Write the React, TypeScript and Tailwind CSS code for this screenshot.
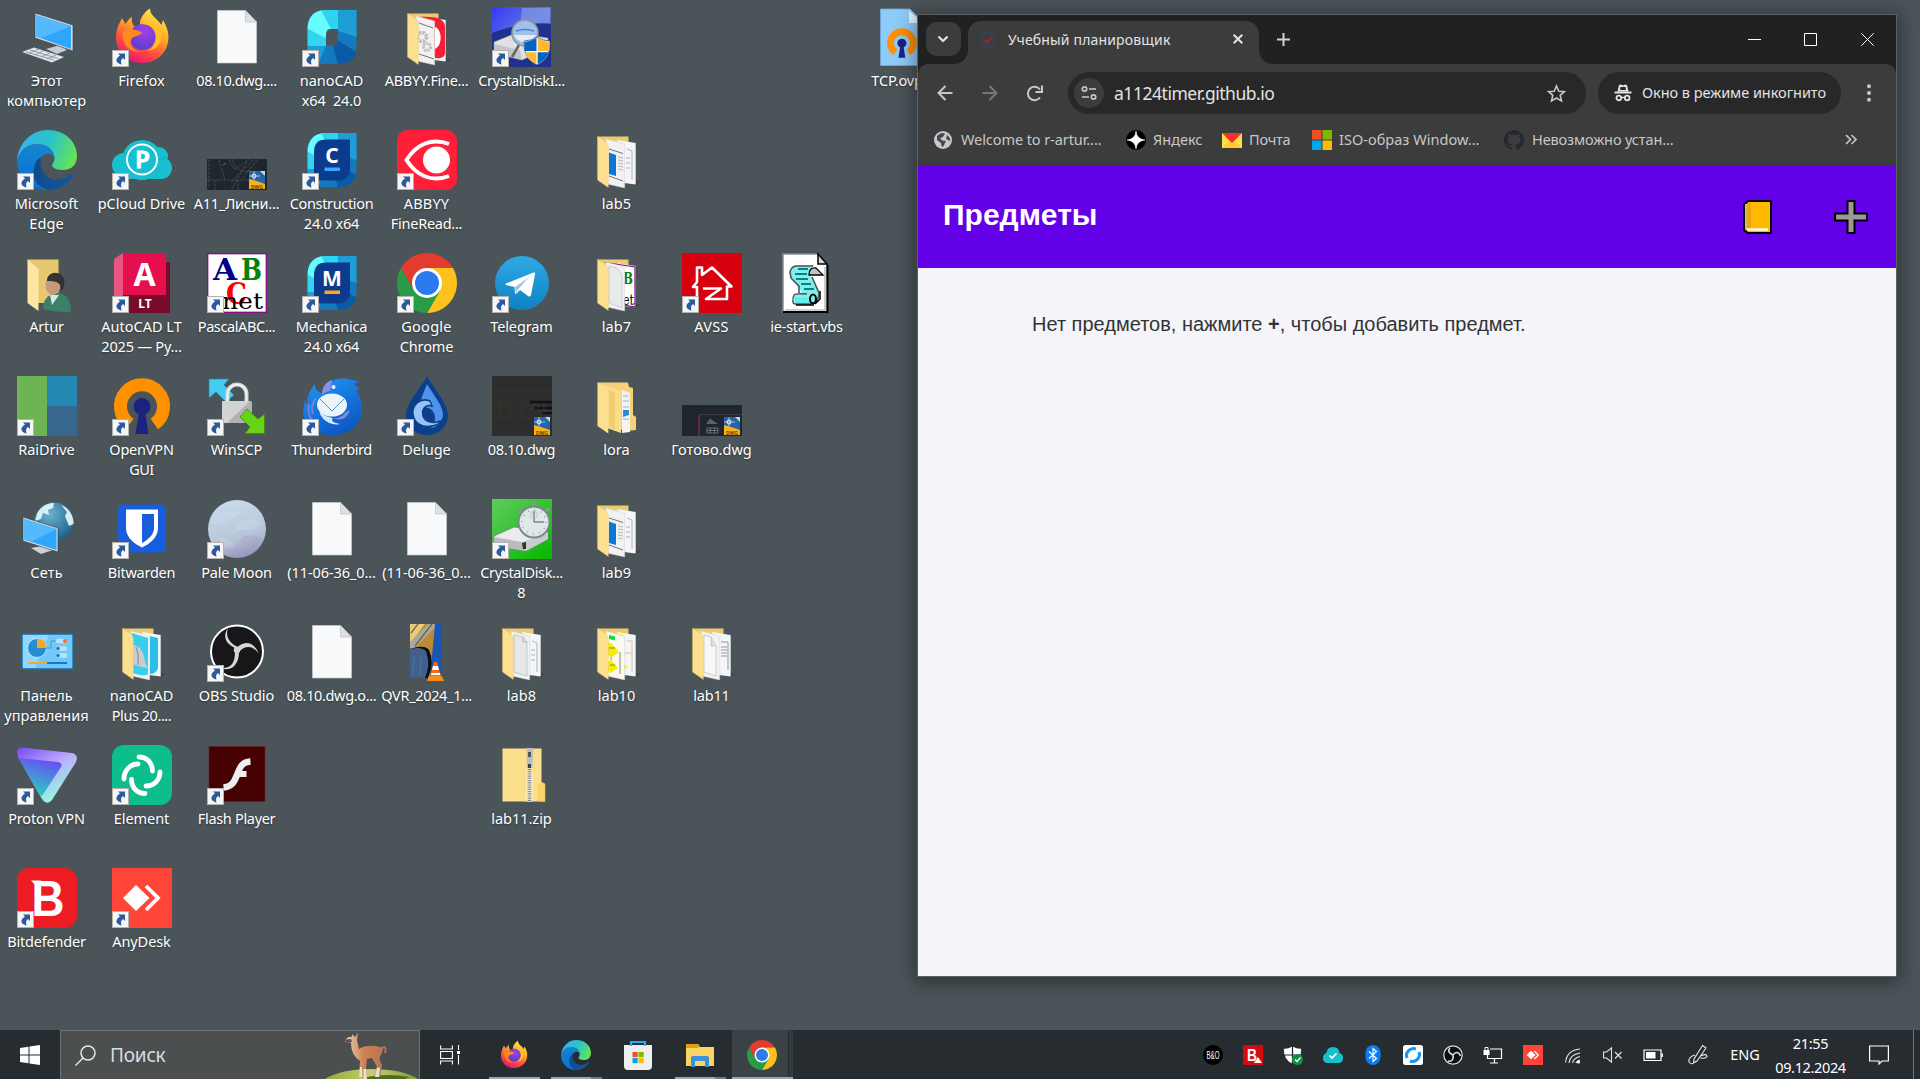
import { useLayoutEffect, useRef, useState, type ReactNode } from "react";

/* Text whose letter spacing is adjusted so that it fills a given width. */
function Fit({ w, children, className = "" }: { w: number; children: string; className?: string }) {
  const ref = useRef<HTMLSpanElement>(null);
  const [spacing, setSpacing] = useState(0);
  useLayoutEffect(() => {
    const el = ref.current;
    if (!el) return;
    el.style.letterSpacing = "0px";
    setSpacing((w + 1.5 - el.getBoundingClientRect().width) / children.length);
  }, [w, children]);
  return (
    <span ref={ref} className={"inline-block whitespace-pre " + className} style={{ letterSpacing: `${spacing}px` }}>
      {children}
    </span>
  );
}

function Art({ children, className = "size-[60px]", box = "0 0 60 60" }: { children: ReactNode; className?: string; box?: string }) {
  return (
    <svg viewBox={box} className={"block shrink-0 overflow-visible " + className} fill="none">
      {children}
    </svg>
  );
}

/* ---------- application icons ---------- */

const ThisPc = () => (
  <Art>
    <path d="M29 42 L43 38 L50 43 L40 47 Z" fill="#c3cbd3" />
    <path d="M18 6 L56 18 V44 L18 31 Z" fill="#d4dade" stroke="#30373c" strokeWidth="0.6" />
    <path d="M19 8 L54 19 V42 L19 29.500 Z" fill="#2ea6fb" />
    <path d="M19 8 L54 19 L52 20 L24 31 L19 29.500 Z" fill="#55b9fd" />
    <path d="M5 45 L17 40.500 L47 50 L35 55.500 Z" fill="#dfe3e6" />
    <path d="M9 45 L37 53 M13 43 L41 51.500 M18 48 L27 43.500 M24 50 L33 46 M30 52 L39 48 M12 46 L22 42" stroke="#848e95" strokeWidth="0.8" />
  </Art>
);

const Edge = ({ className }: { className?: string }) => (
  <Art className={className}>
    <defs>
      <linearGradient id="edA" x1="0" y1="0.300" x2="1" y2="0.600">
        <stop stopColor="#38b3ee" />
        <stop offset="0.500" stopColor="#2bc3c9" />
        <stop offset="1" stopColor="#66e454" />
      </linearGradient>
      <linearGradient id="edB" x1="0.500" y1="0" x2="0.300" y2="1">
        <stop stopColor="#1685cf" />
        <stop offset="1" stopColor="#0a70d4" />
      </linearGradient>
      <linearGradient id="edC" x1="0" y1="0" x2="1" y2="0.200">
        <stop stopColor="#0e4a87" />
        <stop offset="1" stopColor="#13559e" />
      </linearGradient>
    </defs>
    <path d="M0 30 C3 19 10 14 20 14 C30 14 37 20 37.500 27 C33 21 23 23 22 34 C21 46 33 54 44 53 L38 59 C35 60 33 60 30 60 C13 60 0 47 0 30Z" fill="url(#edB)" />
    <path d="M24 27 C21 42 32 53 45 49 C50 48 53 44.500 55 44 C57 44 56 46 55 48 C49 56 40 60 31 60 C21 57 14 49 17 38 C18 33 20 29 24 27 Z" fill="url(#edC)" />
    <path d="M0 30 C2 12 15 0 31 0 C48 0 60 12 60 26 C60 35 54 40 46 40 C38 40 35 37 35 35.500 C35 34 37.500 32 37.500 28 C37.500 20 30 14 20 14 C10 14 3 20 0 30Z" fill="url(#edA)" />
  </Art>
);

const Firefox = ({ className }: { className?: string }) => (
  <Art className={className}>
    <defs>
      <linearGradient id="ffA" x1="0.800" y1="0" x2="0.300" y2="1">
        <stop stopColor="#fff14a" />
        <stop offset="0.400" stopColor="#ffa726" />
        <stop offset="0.720" stopColor="#ff4b3e" />
        <stop offset="1" stopColor="#e5127e" />
      </linearGradient>
      <radialGradient id="ffB" cx="0.600" cy="0.300" r="0.700">
        <stop stopColor="#a33ee8" />
        <stop offset="1" stopColor="#5a3fd0" />
      </radialGradient>
    </defs>
    <path d="M10 11 L13.500 17 C16 13 19 10 20 10 C19 15 21 19 24 20 L28 17 C27 12 34 3 38 1.500 C38 9 46 12 49.500 18 L51 13 C54 18 56.500 24 56.500 30 C56.500 45 45 56 30 56 C15 56 4 45 4 31 C4 22 7 17 10 11Z" fill="url(#ffA)" />
    <circle cx="30.500" cy="30" r="13" fill="url(#ffB)" />
    <path d="M11 25 C16 20 20 22 23 23 C27 24 29 24 30 26 C27 29 23 29 20 31 C17 36 19 42 27 45 C17 45 9 37 11 25Z" fill="#ff8a1c" />
    <path d="M29 18 C38 16 44 22 44 30 C44 36 41 41 36 44 C47 42 51 33 49 25 C46 18 40 16 36 13 C34 16 32 17 29 18Z" fill="#ffc02c" />
  </Art>
);

const Chrome = ({ className }: { className?: string }) => (
  <Art className={className}>
    <path d="M4.020 15 A30 30 0 0 1 55.980 15 H30 L17 37.500 Z" fill="#e33b2e" />
    <path d="M55.980 15 A30 30 0 0 1 30 60 L43 37.500 L30 15Z" fill="#fcc31e" />
    <path d="M30 60 A30 30 0 0 1 4.020 15 L17 37.500 L43 37.500Z" fill="#2a9c47" />
    <circle cx="30" cy="30" r="15" fill="#fff" />
    <circle cx="30" cy="30" r="12" fill="#2b7bee" />
  </Art>
);

const FileIcon = () => (
  <Art>
    <path d="M10.500 3.500 H38.500 L49.500 15 V56 H10.500 Z" fill="#f8f9fa" stroke="#c9cccf" strokeWidth="0.700" />
    <path d="M38.500 3.500 V15 H49.500 Z" fill="#dfe0e1" stroke="#bfc2c4" strokeWidth="0.700" />
  </Art>
);

const nanoTile = (
  <>
    <path d="M24 3 H54.500 V38 C54.500 50 48 57 36 57 H5.500 V22 C5.500 10 12 3 24 3Z" fill="#1579bd" />
    <path d="M24 3 H36 V22 H29 L24 32 L5.500 22 C5.500 10 12 3 24 3Z" fill="#66fcff" />
    <path d="M19 3 H36 V22 H29 Z" fill="#2fd3f2" />
    <path d="M36 3 H54.500 V30 L36 24 Z" fill="#1e9ed4" />
    <path d="M5.500 22 L24 31 V39 H5.500 Z" fill="#33d4ef" />
    <path d="M5.500 39 H24 L16 57 H5.500 Z" fill="#1b9fd6" />
    <path d="M35 33 L54.500 45 C52 53 46 57 36 57 L31 39 Z" fill="#0a5ba6" />
  </>
);
const NanoCad = () => (
  <Art>
    {nanoTile}
    <path d="M28 22 H36 V33 C36 36 34 38.500 31 38.500 H24 V28 C24 25 25 22 28 22Z" fill="#4b5459" />
  </Art>
);
const NanoLetter = ({ letter, bar }: { letter: string; bar: string }) => (
  <Art>
    {nanoTile}
    <path d="M24 9.500 H48 V37 C48 46 44 50.500 35 50.500 H12 V22 C12 14 16 9.500 24 9.500Z" fill="#0c3a8c" />
    <text x="30" y="33" textAnchor="middle" fontSize="21" fontWeight="700" fontFamily="Noto Sans" fill="#fff">{letter}</text>
    <rect x="22.500" y="37.500" width="15.500" height="3.500" fill={bar} />
  </Art>
);

/* Half-open folder; the sheets inside vary from one folder to the next. */
const Folder = ({ children, back }: { children?: ReactNode; back?: ReactNode }) => (
  <Art>
    <path d="M46 50 L54 52 L48 56 Z" fill="#3f474b" />
    <path d="M10.500 6.500 H41.500 V50 L20 54 Z" fill="#eccb70" />
    <path d="M30 10 L48.700 13 V54.500 L37 53 Z" fill="#f4f5f6" />
    {back}
    <path d="M19 9 L37.700 14 V58 L20 54 Z" fill="#f1f1f2" stroke="#d0d0d0" strokeWidth="0.400" />
    {children}
    <path d="M10.500 6.500 L19 12 Q21.300 14 21.300 17 V57.500 L10.500 50 Z" fill="#fde08f" stroke="#e2bf66" strokeWidth="0.400" />
  </Art>
);
const lines = <path d="M23 19 L36 23 M22 46 L35 51 M40 19 L45 21 V50 M39 28 H43 M39 33 H43 M39 38 H43" stroke="#a9adb0" strokeWidth="0.900" />;
const FolderDoc = () => (
  <Folder back={lines}>
    <path d="M22 19 L36 23.500 M22 46 L36 51" stroke="#6f7375" strokeWidth="1" />
    <path d="M22 22.500 L29 25 V46 L22 44 Z" fill="#0c78d4" />
    <path d="M31 27 L36 28 M31 30 L36 31 M31 33 L36 34 M31 36 L36 37 M31 39 L36 40" stroke="#b6b9bb" strokeWidth="1" />
  </Folder>
);
const FolderAbbyy = () => (
  <Folder back={<><path d="M22 10 C40 9 48 12 48 20 V45 C48 50 45 52 38 51 Z" fill="#fb1d38" /><path d="M38 20 C45 22 46 38 38 42" fill="#fff" /></>}>
    <path d="M22 16 L36 21 M22 47 L37 52" stroke="#555" strokeWidth="0.800" />
    <circle cx="25" cy="30" r="4.500" stroke="#b9bdc1" strokeWidth="3.500" strokeDasharray="2.500 1" />
    <circle cx="30" cy="40" r="3.500" stroke="#b9bdc1" strokeWidth="3" strokeDasharray="2 1" />
  </Folder>
);
const FolderPascal = () => (
  <Folder back={<><path d="M18 9.500 L48 14 V54 L37 52" fill="#fff" stroke="#7d1083" strokeWidth="1.200" /><text x="36" y="31" fontSize="17" fontWeight="700" fontFamily="DejaVu Serif" fill="#0a800a" textLength="10" lengthAdjust="spacingAndGlyphs">B</text><text x="36" y="52" fontSize="15" fontFamily="DejaVu Serif" fill="#000" textLength="11" lengthAdjust="spacingAndGlyphs">et</text></>}>
    <path d="M22 13 L30 15 L35 22 V55 L22 50 Z" fill="#e9eaec" stroke="#b9b9bb" strokeWidth="0.600" />
  </Folder>
);
const FolderNano = () => (
  <Folder back={<path d="M38 14 L46 16 V46 Q44 52 38 52 Z" fill="#29bfe8" />}>
    <path d="M20 11 L36 16 V52 Q34 55 20 51 Z" fill="#39cdee" />
    <path d="M21 23 Q31 24 33 40 L36 46 Q30 46 21 42 Z" fill="#c9cdd1" />
    <path d="M24 25 Q27 32 26 43" stroke="#8a8f94" strokeWidth="1.200" />
  </Folder>
);
const FolderPlain = () => (
  <Folder back={lines}>
    <path d="M22 13 L31 15 L35 20 V54 L22 50 Z" fill="#e6e7e9" stroke="#aaadb0" strokeWidth="0.600" />
    <path d="M31 15 V20 H35" stroke="#999" strokeWidth="0.600" />
  </Folder>
);
const FolderFlow = () => (
  <Folder back={<><path d="M28 11 L37 13 L37 16Z M37 42 L41 45 L37 48Z" fill="#fff200" /><path d="M40 19 H45 V50 M38 31 H45" stroke="#c9b99a" strokeWidth="0.800" /></>}>
    <path d="M20 11 L37 16 V57 L20 53 Z" fill="#fdf9ee" />
    <path d="M22 13 L28 14.500 V18.500 L22 17Z" fill="#13dd3a" />
    <path d="M21 20 L25 22 L32 30 L25 35 L21 34Z M21 40 L24 38 L31 46 L24 51 L21 49Z" fill="#f4ee00" />
    <path d="M33 30 V52 M24 35 V38 M22 26 H28 M23 43 H28" stroke="#5c5c40" strokeWidth="0.700" />
  </Folder>
);
const FolderText = () => (
  <Folder back={<path d="M39 20 H46 V48 M39 25 H45 M39 28 H45 M39 31 H45 M39 34 H45" stroke="#93979a" strokeWidth="1" />}>
    <path d="M22 13 L29 15 L34 24 V54 L22 50 Z" fill="#f6f7f8" stroke="#b9bbbd" strokeWidth="0.700" />
    <path d="M29 15 V24 H34" fill="#dcdddf" stroke="#aaa" strokeWidth="0.500" />
  </Folder>
);
const Lora = () => (
  <Art>
    <path d="M10.500 6.500 H41 L42 11 L46 12 V39 L49 41 V54 L40 55 L20 50 Z" fill="#f3d27a" />
    <path d="M35 14 L43 17 V56 L35 57 Z" fill="#f1f3f5" />
    <path d="M36 20 H42 M36 25 H42 M36 31 H42 M36 43 H42" stroke="#9fb7c8" strokeWidth="1" />
    <path d="M36 34 H42 V39 L36 41 Z" fill="#2a8ad8" />
    <path d="M16 9 L34 15 V57 L20 52 Z" fill="#fadc88" />
    <path d="M22 14 L28 17 V54 L22 50 Z" fill="#efcc70" />
    <path d="M10.500 6.500 L19 12 Q21.300 14 21.300 17 V57.500 L10.500 50 Z" fill="#fde08f" />
  </Art>
);
const Zip = () => (
  <Art>
    <path d="M10.500 3.500 H49.500 V37 L53 39 V56.500 H10.500 Z" fill="#fcdf8c" />
    <path d="M46 56 V42 Q46 38 50 37.500 L53 39 V56.500 Z" fill="#fbd36c" stroke="#e8bf5d" strokeWidth="0.500" />
    <path d="M37.500 24 V56.500" stroke="#fff6d8" strokeWidth="6" />
    <path d="M37.500 24 V56.500" stroke="#83888a" strokeWidth="4" strokeDasharray="1.200 1" />
    <path d="M34.500 3 H41 L40.500 23 H35 Z" fill="#babec1" />
    <rect x="36" y="7" width="3" height="5" fill="#50565a" />
    <rect x="36" y="19" width="3" height="4" fill="#3d4144" />
  </Art>
);

const PCloud = () => (
  <Art>
    <circle cx="30" cy="30" r="20" fill="#17bfd0" />
    <circle cx="12" cy="35" r="12" fill="#17bfd0" />
    <circle cx="49" cy="38" r="11" fill="#17bfd0" />
    <circle cx="47" cy="26" r="9" fill="#17bfd0" />
    <rect x="9" y="34" width="42" height="15" fill="#17bfd0" />
    <path d="M12 23 Q17 22 19 26 M48 31 Q52 26 56 29" stroke="#0fa3b6" strokeWidth="0.800" />
    <circle cx="30" cy="29.500" r="15" stroke="#fff" strokeWidth="2" />
    <text x="30.500" y="37.500" textAnchor="middle" fontSize="22" fontWeight="900" fontFamily="Lato" fill="#fff" stroke="#fff" strokeWidth="0.800">P</text>
  </Art>
);

const DwgBadge = () => (
  <g>
    <rect x="42" y="41" width="16" height="18" fill="#2863a8" />
    <path d="M53 41 H58 V46 Z" fill="#c8d8ea" />
    <path d="M42 46 H53 M47 41 V52" stroke="#9cbde0" strokeWidth="1" />
    <circle cx="47" cy="46" r="2" stroke="#fff" strokeWidth="0.900" />
    <path d="M42 49 Q50 51 58 54 V59 H42 Z" fill="#f7b31b" />
    <text x="50" y="58.500" textAnchor="middle" fontSize="5.500" fontWeight="700" fontFamily="Roboto" fill="#6b4a06">DWG</text>
  </g>
);
const DwgA = () => (
  <Art>
    <rect y="29" width="60" height="31" fill="#1f262e" />
    <path d="M2 30 V58 M0 50 H42 M12 30 L18 50 M22 30 L28 40 L34 35 L42 29 M40 32 L24 60 M46 30 L24 52 M50 30 L34 50 M25 29 Q32 46 44 40 M8 50 V60 M31 50 V60" stroke="#59626b" strokeWidth="0.600" strokeDasharray="3 1" />
    <path d="M16 35 L19 33" stroke="#2b7fd8" strokeWidth="1" />
    <DwgBadge />
  </Art>
);
const DwgB = () => (
  <Art>
    <rect width="60" height="60" fill="#2d2d2d" />
    <path d="M0 15 H60 M0 29 H40 M0 42 H42 M7 14 V44 M18 14 V44 M30 14 V44 M42 14 V26 M52 14 V26" stroke="#3b3b26" strokeWidth="0.800" strokeDasharray="2 1" />
    <path d="M38 26 H60 M43 32 H60 M50 37 H60" stroke="#121218" strokeWidth="2.500" />
    <path d="M39 33 L43 27 M45 35 H60 M46 28 V33 M52 28 V36" stroke="#47474d" strokeWidth="0.600" />
    <DwgBadge />
  </Art>
);
const DwgC = () => (
  <Art>
    <rect y="29" width="60" height="31" fill="#1f262e" />
    <path d="M17 39 V60" stroke="#7b3038" strokeWidth="1.500" />
    <path d="M17 38.500 H60" stroke="#4b3f48" strokeWidth="0.800" />
    <path d="M24 48 L28 42.500 L36 48 Z" fill="#59626a" />
    <path d="M25 52 H36 V57 H25 Z M25 54.500 H36 M28.500 52 V57 M32.500 52 V57" stroke="#77818a" strokeWidth="0.800" />
    <DwgBadge />
  </Art>
);

const Abbyy = () => (
  <Art>
    <rect width="60" height="60" rx="11" fill="#ff1f38" />
    <path d="M52 14 C34 7 19 15 9.500 30 C19 45 34 53 52 46" stroke="#fff" strokeWidth="4" />
    <circle cx="39.500" cy="30" r="13.500" fill="#fff" />
  </Art>
);
const Artur = () => (
  <Art>
    <path d="M10.500 6.500 H41.500 V50 H20 Z" fill="#e9c76e" />
    <path d="M10.500 6.500 L21.500 16 V58 L10.500 50 Z" fill="#fde6a2" />
    <path d="M26 56 C26 44 34 40 41 40 C50 41 54 47 54 59 Q40 60 26 56Z" fill="#3c8067" />
    <path d="M33 42 L35 52 L42 42Z" fill="#d7e7ea" />
    <ellipse cx="36" cy="32" rx="7.500" ry="10" fill="#c69a78" />
    <path d="M30 28 C30 17 47 17 47.500 29 C47 34 46 37 44 38 C44 30 41 28 30 28Z" fill="#333" />
  </Art>
);
const AutoCad = () => (
  <Art>
    <path d="M2 6 L11 0 V46 L2 54Z" fill="#ea5580" />
    <path d="M52 9 H58 V60 H2 L11 42 H52Z" fill="#780a2a" />
    <path d="M11 0 H52 Q54 0 54 2 V42 H11Z" fill="#e60f4e" />
    <text x="32.500" y="33" textAnchor="middle" fontSize="32" fontWeight="700" fontFamily="Noto Sans" fill="#fff">A</text>
    <text x="33" y="55" textAnchor="middle" fontSize="12" fontWeight="700" fontFamily="Noto Sans" fill="#fff">LT</text>
  </Art>
);
const Pascal = () => (
  <Art>
    <rect x="0.700" y="0.700" width="58.600" height="58.600" fill="#fff" stroke="#820a86" strokeWidth="1.300" />
    <g fontFamily="DejaVu Serif" fontWeight="700">
      <text x="6" y="27" fontSize="30" fill="#00008b" textLength="24" lengthAdjust="spacingAndGlyphs">A</text>
      <text x="34" y="27" fontSize="30" fill="#078007" textLength="21" lengthAdjust="spacingAndGlyphs">B</text>
      <text x="19" y="51" fontSize="29" fill="#f00" textLength="21" lengthAdjust="spacingAndGlyphs">C</text>
    </g>
    <text x="15" y="56" fontSize="23" fontFamily="DejaVu Serif" fill="#000" textLength="41" lengthAdjust="spacingAndGlyphs">net</text>
  </Art>
);
const RaiDrive = () => (
  <Art>
    <rect width="30" height="60" fill="#6cb552" />
    <rect x="30" width="30" height="30" fill="#2588b2" />
    <rect x="30" y="30" width="30" height="30" fill="#37678f" />
  </Art>
);
const openVpnMark = (
  <>
    <path d="M17.700 48 A21.500 21.500 0 1 1 42.300 48" stroke="#ff9000" strokeWidth="13" />
    <circle cx="30" cy="30.500" r="8.500" fill="#1b237e" />
    <path d="M27 36 H33 L36.500 58 H23.500Z" fill="#1b237e" />
  </>
);
const OpenVpn = () => <Art>{openVpnMark}</Art>;
const OvpnFile = () => (
  <Art>
    <path d="M8.500 2 H38 L51 15 V58.500 H8.500Z" fill="#8ecbfb" stroke="#6fa9d8" strokeWidth="0.800" />
    <path d="M37 4 V16 H51Z" fill="#e6f5fe" />
    <g transform="translate(14 20) scale(0.53)">{openVpnMark}</g>
  </Art>
);
const WinScp = () => (
  <Art>
    <path d="M2 3 H22 L17 9 L27 19 L19 26 L9 16 L2 22Z" fill="#45cdf0" stroke="#1b82a8" strokeWidth="0.600" />
    <path d="M20.500 25 V18 A9 9 0 0 1 39.500 18 V25" stroke="#d6d6d6" strokeWidth="4" />
    <path d="M20.500 25 V18 A9 9 0 0 1 39.500 18 V25" stroke="#f7f7f7" strokeWidth="1.300" />
    <rect x="15" y="25" width="30" height="22" rx="1.500" fill="#b2b2b2" />
    <path d="M15 26 Q15 25 17 25 H43 L20 47 H15Z" fill="#d3d3d3" />
    <path d="M40 33 L51 43 L57.500 38 V57.500 H38 L43 51 L33 41Z" fill="#66d414" stroke="#37860c" strokeWidth="0.700" />
  </Art>
);
const Thunderbird = () => (
  <Art>
    <defs>
      <linearGradient id="tbA" x1="0.200" y1="0" x2="0.700" y2="1">
        <stop stopColor="#1f93f2" />
        <stop offset="1" stopColor="#0b55c2" />
      </linearGradient>
    </defs>
    <path d="M20 18 C21 6 34 1 46 3 C52 4 56 5 57 6 L52 8 L58 13 L54 14 C58 20 60 26 60 33 C60 48 48 59 31 59 C14 59 1 49 1 34 L3 24 L5 29 C5 20 8 14 13 8 C13 15 16 14 20 18Z" fill="url(#tbA)" />
    <path d="M20 19 C20 10 24 6 30 4 L28 15 C25 15 22 17 20 19Z" fill="#8d8de8" />
    <path d="M7 28 C5 38 9 45 16 50 M14 22 Q8 30 11 38" stroke="#7a7fe0" strokeWidth="2" />
    <circle cx="31.500" cy="11" r="2" fill="#e4f2ff" />
    <ellipse cx="30" cy="29" rx="15" ry="11.500" fill="#e9f4fd" />
    <path d="M17 29 C17 38 24 41 31 42 C28 45 32 47 38 48 C31 50 22 46 18 38Z" fill="#d3eafb" />
    <path d="M18 23 L30 35 L42 23" stroke="#568fc5" strokeWidth="1" />
    <path d="M44 36 Q39 43 31 42 Q44 47 48 34Z" fill="#8a86e4" />
  </Art>
);
const Deluge = () => (
  <Art>
    <path d="M30 0 C32 6 51 27 51 39 C51 50 42 59 30 59 C18 59 9 50 9 39 C9 27 28 6 30 0Z" fill="#0c3f8a" />
    <path d="M30 8 C33 14 46 29 46 38 C46 46 40 51 34 52 C43 42 36 29 25 32 C20 30 28 14 30 8Z" fill="#5291ea" />
    <path d="M33 25 C23 21 15 29 16 38 C17 47 25 52 35 50 C40 49 43 47 44 45 C35 48 28 46 26 40 C24 33 29 28 35 30Z" fill="#97c3fa" stroke="#0c3f8a" strokeWidth="1.500" />
  </Art>
);
const Network = () => (
  <Art>
    <defs>
      <radialGradient id="ntA" cx="0.400" cy="0.300" r="0.800">
        <stop stopColor="#6bb2d2" />
        <stop offset="1" stopColor="#15567c" />
      </radialGradient>
    </defs>
    <circle cx="37" cy="23" r="19.500" fill="url(#ntA)" />
    <path d="M20 15 C23 8 30 4 37 4 L36 9 L31 11 L32 16 L26 14 L24 20 L18 22Z M44 6 C52 9 57 17 56.500 25 L52 27 L48 17 L50 13Z" fill="#d5eff2" />
    <path d="M14 49 L30 46 L36 51 L24 55Z" fill="#cbd2d8" />
    <path d="M6 18 L41 29 V53 L6 42Z" fill="#d5dbdf" stroke="#30373c" strokeWidth="0.600" />
    <path d="M7 20 L39.500 30 V51 L7 40.500Z" fill="#2ea6fb" />
    <path d="M7 20 L39.500 30 L14 43 L7 40.500Z" fill="#55b9fd" />
  </Art>
);
const Bitwarden = () => (
  <Art>
    <rect x="6" y="5.500" width="48" height="48" rx="6" fill="#185ddc" />
    <path d="M14 10.500 H46 V29 C46 39 37 45 30 48.500 C23 45 14 39 14 29Z" fill="#fff" />
    <path d="M30 15 H42 V29 C42 36 36 40.500 30 44Z" fill="#185ddc" />
  </Art>
);
const PaleMoon = () => (
  <Art>
    <defs>
      <linearGradient id="pmA" x1="0.300" y1="0" x2="0.600" y2="1">
        <stop stopColor="#c8dbec" />
        <stop offset="0.650" stopColor="#b8c5d8" />
        <stop offset="1" stopColor="#9793bd" />
      </linearGradient>
    </defs>
    <circle cx="30" cy="30" r="29" fill="url(#pmA)" />
    <path d="M8 18 Q16 11 24 13 T40 9 Q30 18 23 21 T8 25Z M32 24 Q42 17 54 23 Q49 33 38 31 T22 38Z M12 38 Q22 40 29 47 Q20 51 14 46Z" fill="#d6e2ee" opacity="0.300" />
    <path d="M36 37 Q47 34 55 39 Q50 49 42 53 Q39 44 32 43Z" fill="#a79fbe" opacity="0.300" />
  </Art>
);
const ControlPanel = () => (
  <Art>
    <rect x="5" y="12" width="51" height="35" rx="1" fill="#73c8fb" stroke="#0f6dae" strokeWidth="1.300" />
    <path d="M6 13 H32 L18 46 H6Z" fill="#92d7fd" />
    <circle cx="20" cy="26" r="9.500" fill="#248ece" stroke="#d9f1ff" strokeWidth="0.800" />
    <path d="M20 26 V16.500 A9.500 9.500 0 0 1 29.500 26Z" fill="#faa61a" />
    <path d="M29 26 H34 V19 H39" stroke="#2f92c8" strokeWidth="0.800" />
    <path d="M41 19 H48 M41 26.500 H48 M41 33.500 H48" stroke="#b9e2fb" strokeWidth="4.500" strokeLinecap="round" />
    <circle cx="48" cy="19" r="1.900" fill="#fc6a19" />
    <circle cx="41" cy="26.500" r="1.800" fill="#197db6" />
    <circle cx="41" cy="33.500" r="1.800" fill="#197db6" />
    <path d="M11 41 H30" stroke="#f1a736" strokeWidth="2" />
    <path d="M30 41 H50" stroke="#0f7bc3" strokeWidth="2" />
  </Art>
);
const Obs = ({ className }: { className?: string }) => (
  <Art className={className}>
    <circle cx="30" cy="29.500" r="26" fill="#17171a" stroke="#fff" strokeWidth="2" />
    <g fill="#d5d5d5">
      <path d="M31 27 C21 24 14 16 21 6 C18 14 22 22 33 26Z" />
      <path d="M28 30 C28 41 24 47 13 46 C22 50 32 45 32 30Z" />
      <path d="M29 27 C36 18 47 19 52 32 C46 23 38 23 32 30Z" />
      <circle cx="30" cy="28" r="3.200" />
    </g>
  </Art>
);
const Video = () => (
  <Art>
    <rect x="13" y="2" width="32" height="54" fill="#bb8a35" />
    <path d="M13 2 H28 L13 22Z" fill="#e8c97d" />
    <path d="M31 2 H41 L18 26 H13 V20Z" fill="#a8a99c" />
    <path d="M21 2 L14 11 M35 2 L18 24" stroke="#5e4c2c" strokeWidth="1.200" />
    <path d="M38 2 H45 V56 H33 Z" fill="#1955b5" />
    <path d="M13 27 Q27 22 32 28 Q38 40 31 56 H13Z" fill="#0a0d15" />
    <path d="M13 27 Q24 24 29 29 Q34 43 28 56 H13Z" fill="#40618e" />
    <path d="M17 34 L16 53 M24 34 L23 54" stroke="#57789f" strokeWidth="0.700" />
    <path d="M37 40 H40 L44 55 H33Z" fill="#f27013" />
    <path d="M36 44 H41 L42 48 H35Z M34.500 51 H43 L43.500 53 H34Z" fill="#fff" />
    <path d="M32 54 H45 L47 59 H30Z" fill="#f98b17" />
  </Art>
);
const Proton = () => (
  <Art>
    <defs>
      <linearGradient id="pvA" x1="0" y1="0" x2="0.600" y2="1">
        <stop stopColor="#7548f5" />
        <stop offset="0.500" stopColor="#bcaeff" />
        <stop offset="1" stopColor="#93fce0" />
      </linearGradient>
      <linearGradient id="pvB" x1="0.700" y1="0" x2="0.400" y2="1">
        <stop stopColor="#6e46f8" />
        <stop offset="1" stopColor="#24d5bd" />
      </linearGradient>
    </defs>
    <path d="M5 2.500 L55 8 Q62 10 59 17 L35 55 Q30 61 25 54 L1 12 Q-2 3 5 2.500Z" fill="url(#pvA)" />
    <path d="M1.500 13 L41 17 Q46 18 44 22 L25 51 L22.500 50Z" fill="url(#pvB)" />
  </Art>
);
const Element = () => (
  <Art>
    <rect width="60" height="60" rx="12" fill="#0dbd8b" />
    {[
      "M27 12 C35 12 40.500 18 40.500 26",
      "M48 27 C48 35 42 41 34 41",
      "M33 48.500 C25 48.500 19.500 42.500 19.500 34.500",
      "M12 34 C12 26 17.500 19 26 19",
    ].map((d) => (
      <path key={d} d={d} stroke="#fff" strokeWidth="4.800" strokeLinecap="round" />
    ))}
  </Art>
);
const Flash = () => (
  <Art>
    <rect x="2" y="1.500" width="56" height="55" fill="#460102" stroke="#642222" strokeWidth="0.600" />
    <path d="M43.500 16.500 C34 17 33 23 30 30 C27 38 24 42 16.500 42.500" stroke="#eee" strokeWidth="6.500" />
    <path d="M29 29 H39.500" stroke="#eee" strokeWidth="6" />
  </Art>
);
const Bitdefender = () => (
  <Art>
    <rect width="60" height="60" rx="12" fill="#ec1c24" />
    <path d="M14 12.500 H24 V19 H20 Z" fill="#fff" />
    <text x="14.500" y="48" fontSize="50" fontWeight="700" fontFamily="Liberation Sans" fill="#fff" textLength="33" lengthAdjust="spacingAndGlyphs">B</text>
  </Art>
);
const anyMark = (
  <>
    <path d="M24 17 L37.500 30 L24 43 L11 30Z" fill="#fff" />
    <path d="M34 18 L46 30 L34 42" stroke="#fff" strokeWidth="3.800" />
  </>
);
const AnyDesk = () => (
  <Art>
    <rect width="60" height="60" fill="#ff4438" />
    {anyMark}
  </Art>
);
const CrystalInfo = () => (
  <Art>
    <defs>
      <linearGradient id="ciA" x1="0" y1="0" x2="1" y2="1">
        <stop stopColor="#3437f5" />
        <stop offset="0.500" stopColor="#6178dd" />
        <stop offset="1" stopColor="#1d2270" />
      </linearGradient>
    </defs>
    <rect width="59" height="60" rx="1" fill="url(#ciA)" />
    <path d="M0 26 Q30 14 59 17 V60 H0Z" fill="#20308f" />
    <path d="M30 1 H58 V16 Q44 15 28 19Z" fill="#8198e6" opacity="0.700" />
    <path d="M2 35 L24 26 L56 31 V42 L30 53 L2 46Z" fill="#e1e1e4" stroke="#8b8b93" strokeWidth="0.600" />
    <path d="M2 37 L28 43 L30 53 L2 46Z" fill="#c3c3ca" />
    <path d="M20 50 L27 38" stroke="#63656a" strokeWidth="2.500" />
    <circle cx="33" cy="26" r="13" fill="#9fc0ea" stroke="#8e969d" strokeWidth="1.600" />
    <path d="M22 28 H44 A12 12 0 0 1 22 28" fill="#e3ebf4" />
    <path d="M24 24 Q33 21 42 24" stroke="#4b7cd8" strokeWidth="1.500" />
    <path d="M45 30 Q51 34 58 34 Q59 52 45 58 Q31 52 32 34 Q39 34 45 30Z" fill="#fff" stroke="#49525c" strokeWidth="0.800" />
    <path d="M44.500 31 V44 H32.500 V35 Q39 34 44.500 31Z M45.700 45.200 H56.500 Q54 53 45.700 57Z" fill="#0063c6" />
    <path d="M45.700 31 Q51 34 57.500 35 V44 H45.700Z M44.500 45.200 V57 Q35 53 33 45.200Z" fill="#feba35" />
  </Art>
);
const CrystalMark = () => (
  <Art>
    <defs>
      <linearGradient id="cmA" x1="0" y1="0" x2="0.900" y2="1">
        <stop stopColor="#60cc60" />
        <stop offset="1" stopColor="#0bb803" />
      </linearGradient>
    </defs>
    <rect width="60" height="60" fill="url(#cmA)" />
    <path d="M2 37 L22 28 L56 33 V40 L34 52 L2 46Z" fill="#ececee" stroke="#757a76" strokeWidth="0.700" />
    <path d="M2 38 L30 43 L34 52 L2 47Z" fill="#babac2" />
    <path d="M30 43 L56 34 V40 L34 52Z" fill="#cacad0" />
    <path d="M27 9 L31 13 M57 9 L53 13 M42.500 7 V2" stroke="#8d9396" strokeWidth="3" />
    <circle cx="42" cy="23" r="15.500" fill="#dfe8e9" stroke="#7d888d" strokeWidth="2" />
    <circle cx="42" cy="23" r="12" stroke="#8a9498" strokeWidth="1.300" strokeDasharray="1 5.280" />
    <path d="M42 12 V23 H52" stroke="#3f484c" strokeWidth="0.900" />
    <circle cx="42" cy="16" r="3.500" stroke="#aab4b6" strokeWidth="0.600" />
    <path d="M30 44 L34 43 V50 L31 50Z" fill="#243c1a" />
  </Art>
);
const Telegram = () => (
  <Art>
    <defs>
      <linearGradient id="tgA" x1="0" y1="0" x2="0" y2="1">
        <stop stopColor="#2fa9e6" />
        <stop offset="1" stopColor="#0f82c2" />
      </linearGradient>
    </defs>
    <circle cx="30" cy="30" r="27" fill="url(#tgA)" />
    <path d="M14 30.500 L41.500 19.500 Q43.500 19 43 21.500 L39 42 Q38.300 44.500 36 43 L28 37 L24 41 Q23 41 23 40 L22.500 34 L14 32 Q13 31 14 30.500Z" fill="#fff" />
    <path d="M23 34 L37 24 L26.500 36 L24 41Z" fill="#9cc8e2" />
  </Art>
);
const Avss = () => (
  <Art>
    <rect width="60" height="60" fill="#d7000f" />
    <path d="M15 43 V34 H11 L15 29 V14.500 H20 V22 L30 14.500 L49.500 33.500 H45 V46 H24 L39 35.500 H21" stroke="#fff" strokeWidth="2.600" strokeLinejoin="round" />
  </Art>
);
const Vbs = () => (
  <Art>
    <path d="M6 1 H40 L50 12 V59 H6Z" fill="#fff" stroke="#8b8b8b" strokeWidth="1.500" />
    <path d="M41 1 L50 11 H41Z" fill="#d5d5d5" stroke="#000" strokeWidth="1.500" />
    <path d="M6 59 H54.500 V12" stroke="none" />
    <path d="M6 59 H50.500 V12" stroke="#000" strokeWidth="2" />
    <path d="M48 14 V57 H8" stroke="#c0c0c0" strokeWidth="1.600" />
    <path d="M14 14 Q17 12 21 12 H37 L33 22 L42 38 L41 48 L35 51 H20 Q15 50 18 42 L25 39 L14 26Z" fill="#7df0ee" />
    <path d="M14 25 L13 19 Q14 14 19 13 H36 M14 25 L22 33 V40 M35 24 L42 40 Q42 49 34 51 H18 Q14 50 17 42 Q18 40 30 41" stroke="#555" strokeWidth="1.600" />
    <path d="M32 22 Q32 14 39 15 L46 22 H35Z" fill="#c3c3c3" stroke="#000" strokeWidth="1.300" />
    <path d="M21 16 H31 M18 21 H30 M19 26 H31 M24 31 H34 M27 36 H37" stroke="#0a8080" strokeWidth="1.800" />
    <path d="M15 46 H32 M19 49 H32" stroke="#1ee8e8" strokeWidth="1.500" strokeDasharray="1.500 1.500" />
    <ellipse cx="36" cy="46" rx="3" ry="4.500" stroke="#000" strokeWidth="2" />
    <path d="M19 52 H37 M43 38 V46 L38 51" stroke="#000" strokeWidth="1.500" />
  </Art>
);

/* ---------- desktop grid ---------- */

type Line = [string, number];
type Item = { icon: ReactNode; lines: Line[]; link?: boolean } | null;
const it = (icon: ReactNode, ...l: Line[]): Item => ({ icon, lines: l });
const ln = (icon: ReactNode, ...l: Line[]): Item => ({ icon, lines: l, link: true });

const columns: Item[][] = [
  [
    it(<ThisPc />, ["Этот", 30], ["компьютер", 78]),
    ln(<Edge />, ["Microsoft", 62], ["Edge", 33]),
    it(<Artur />, ["Artur", 33]),
    ln(<RaiDrive />, ["RaiDrive", 55]),
    it(<Network />, ["Сеть", 31]),
    it(<ControlPanel />, ["Панель", 51], ["управления", 83]),
    ln(<Proton />, ["Proton VPN", 75]),
    ln(<Bitdefender />, ["Bitdefender", 77]),
  ],
  [
    ln(<Firefox />, ["Firefox", 45]),
    ln(<PCloud />, ["pCloud Drive", 86]),
    ln(<AutoCad />, ["AutoCAD LT", 79], ["2025 — Py...", 79]),
    ln(<OpenVpn />, ["OpenVPN", 63], ["GUI", 23]),
    ln(<Bitwarden />, ["Bitwarden", 66]),
    it(<FolderNano />, ["nanoCAD", 62], ["Plus 20....", 58]),
    ln(<Element />, ["Element", 54]),
    ln(<AnyDesk />, ["AnyDesk", 57]),
  ],
  [
    it(<FileIcon />, ["08.10.dwg....", 79]),
    it(<DwgA />, ["A11_Лисни...", 84]),
    ln(<Pascal />, ["PascalABC...", 76]),
    ln(<WinScp />, ["WinSCP", 50]),
    ln(<PaleMoon />, ["Pale Moon", 69]),
    ln(<Obs />, ["OBS Studio", 74]),
    ln(<Flash />, ["Flash Player", 76]),
  ],
  [
    ln(<NanoCad />, ["nanoCAD", 62], ["x64  24.0", 58]),
    ln(<NanoLetter letter="C" bar="#36a5fb" />, ["Construction", 82], ["24.0 x64", 54]),
    ln(<NanoLetter letter="M" bar="#ffa51f" />, ["Mechanica", 70], ["24.0 x64", 54]),
    ln(<Thunderbird />, ["Thunderbird", 79]),
    it(<FileIcon />, ["(11-06-36_0...", 87]),
    it(<FileIcon />, ["08.10.dwg.o...", 88]),
  ],
  [
    it(<FolderAbbyy />, ["ABBYY.Fine...", 82]),
    ln(<Abbyy />, ["ABBYY", 44], ["FineRead...", 70]),
    ln(<Chrome />, ["Google", 49], ["Chrome", 52]),
    ln(<Deluge />, ["Deluge", 47]),
    it(<FileIcon />, ["(11-06-36_0...", 87]),
    it(<Video />, ["QVR_2024_1...", 89]),
  ],
  [
    ln(<CrystalInfo />, ["CrystalDiskI...", 85]),
    null,
    ln(<Telegram />, ["Telegram", 61]),
    it(<DwgB />, ["08.10.dwg", 66]),
    ln(<CrystalMark />, ["CrystalDisk...", 81], ["8", 7]),
    it(<FolderPlain />, ["lab8", 28]),
    it(<Zip />, ["lab11.zip", 59]),
  ],
  [
    null,
    it(<FolderDoc />, ["lab5", 28]),
    it(<FolderPascal />, ["lab7", 28]),
    it(<Lora />, ["lora", 25]),
    it(<FolderDoc />, ["lab9", 28]),
    it(<FolderFlow />, ["lab10", 36]),
  ],
  [null, null, ln(<Avss />, ["AVSS", 33]), it(<DwgC />, ["Готово.dwg", 79]), null, it(<FolderText />, ["lab11", 35])],
  [null, null, it(<Vbs />, ["ie-start.vbs", 71])],
  [it(<OvpnFile />, ["TCP.ovpn", 59])],
];

function DesktopItem({ item }: { item: Item }) {
  if (!item) return <div className="h-[123px]" />;
  return (
    <div className="flex h-[123px] flex-col items-center pt-[7px]">
      <div className="relative">
        {item.icon}
        {item.link && (
          <svg viewBox="0 0 17 17" className="absolute bottom-0 left-0 size-[17px]">
            <rect x="0.500" y="0.500" width="16" height="16" fill="#f6f6f6" stroke="#b5b2ae" />
            <path d="M6 3.500 H13 V10 L11 8 C9 9.500 8.500 11 9.500 14.500 C6.500 14 4 12 4.500 9.500 C5 7.500 6.500 6.500 8 5.500Z" fill="#2c5a9c" />
          </svg>
        )}
      </div>
      <div className="mt-[3px] mr-px flex flex-col items-center text-[14.5px] leading-5 text-white [text-shadow:0_1px_2px_rgb(0_0_0/0.4)]">
        {item.lines.map(([t, w]) => (
          <Fit key={t} w={w}>{t}</Fit>
        ))}
      </div>
    </div>
  );
}

/* ---------- browser window ---------- */

const stroke = { stroke: "#c7c7c7", strokeWidth: 2 };

function Bookmark({ icon, text, w, className }: { icon: ReactNode; text: string; w: number; className: string }) {
  return (
    <div className={"flex shrink-0 items-center text-[14.5px] text-[#c7c7c7] " + className}>
      {icon}
      <Fit w={w}>{text}</Fit>
    </div>
  );
}

function Browser() {
  return (
    <div className="absolute top-[14px] left-[917px] flex h-[963px] w-[980px] flex-col border border-[#596462] bg-[#f4f4fa] shadow-[0_3px_18px_3px_rgb(0_0_0/0.38)]">
      <div className="flex h-[49px] shrink-0 items-start bg-[#1f2220] text-[#e3e3e3]">
        <div className="mt-[7px] ml-2 flex h-[34px] w-[35px] items-center justify-center rounded-[11px] bg-[#3c3c3c]">
          <Art className="mr-px h-[8px] w-[12px]" box="0 0 12 8"><path d="M1.500 1.500 L6 6 L10.500 1.500" stroke="#e3e3e3" strokeWidth="2.200" /></Art>
        </div>
        <div className="relative mt-[6px] ml-[7px] flex h-[43px] w-[291px] items-center rounded-t-[13px] bg-[#3c3c3c] pb-[6px] pl-[11px]">
          <Art className="absolute bottom-0 -left-[14px] size-[14px]" box="0 0 14 14"><path d="M14 0 V14 H0 A14 14 0 0 0 14 0Z" fill="#3c3c3c" /></Art>
          <Art className="absolute -right-[14px] bottom-0 size-[14px]" box="0 0 14 14"><path d="M0 0 V14 H14 A14 14 0 0 1 0 0Z" fill="#3c3c3c" /></Art>
          <Art className="size-[18px]" box="0 0 18 18">
            <circle cx="9" cy="9" r="7.500" stroke="#34465a" strokeWidth="1.500" />
            <path d="M5 8.500 L8.500 11.500 L13 5.500" stroke="#b01c3c" strokeWidth="1.300" />
          </Art>
          <Fit w={161} className="ml-[11px] text-[14px]">Учебный планировщик</Fit>
          <Art className="absolute top-[13px] left-[265px] size-[10px]" box="0 0 10 10"><path d="M0.700 0.700 L9.300 9.300 M9.300 0.700 L0.700 9.300" stroke="#e3e3e3" strokeWidth="2" /></Art>
        </div>
        <Art className="mt-[18px] ml-[18px] size-[13px]" box="0 0 13 13"><path d="M6.500 0 V13 M0 6.500 H13" stroke="#d2d2d2" strokeWidth="2" /></Art>
        <div className="mt-[18px] mr-[22px] ml-auto flex gap-[43px]">
          <Art className="size-[13px]" box="0 0 13 13"><path d="M0 6.500 H13" stroke="#fff" /></Art>
          <Art className="size-[13px]" box="0 0 13 13"><path d="M0.500 0.500 H12.500 V12.500 H0.500Z" stroke="#fff" /></Art>
          <Art className="ml-[1px] size-[13px]" box="0 0 13 13"><path d="M0.300 0.300 L12.700 12.700 M12.700 0.300 L0.300 12.700" stroke="#fff" /></Art>
        </div>
      </div>
      <div className="h-[101px] shrink-0 bg-[#1f2220]">
        <div className="flex h-full flex-col rounded-t-[10px] bg-[#3c3c3c]">
          <div className="flex h-[50px] items-center pt-[8px]">
            <Art className="ml-[19px] size-[16px]" box="0 0 16 16"><path d="M15.500 8 H2 M8.500 1 L1.500 8 L8.500 15" {...stroke} /></Art>
            <Art className="ml-[29px] size-[16px]" box="0 0 16 16"><path d="M0.500 8 H14 M7.500 1 L14.500 8 L7.500 15" stroke="#787878" strokeWidth="2" /></Art>
            <Art className="ml-[28px] size-[17px]" box="0 0 17 17">
              <path d="M14 12.500 A6.700 6.700 0 1 1 14 4.500" {...stroke} />
              <path d="M16 0.500 V7 H9.500" {...stroke} />
            </Art>
            <div className="ml-[25px] flex h-[42px] w-[518px] items-center rounded-full bg-[#282828] pl-[6px]">
              <div className="flex size-[30px] items-center justify-center rounded-full bg-[#3c3c3c]">
                <Art className="size-[16px]" box="0 0 16 16">
                  <circle cx="3.500" cy="4" r="2.200" {...stroke} strokeWidth="1.700" />
                  <circle cx="12.500" cy="12" r="2.200" {...stroke} strokeWidth="1.700" />
                  <path d="M8 4 H15 M1 12 H8" {...stroke} strokeWidth="1.700" />
                </Art>
              </div>
              <Fit w={159} className="ml-[10px] text-[17.5px] text-[#e3e3e3]">a1124timer.github.io</Fit>
              <Art className="mr-[20px] ml-auto size-[19px]" box="0 0 19 19">
                <path d="M9.500 2 L11.800 7.200 L17.400 7.700 L13.200 11.400 L14.500 16.900 L9.500 14 L4.500 16.900 L5.800 11.400 L1.600 7.700 L7.200 7.200Z" {...stroke} strokeWidth="1.600" />
              </Art>
            </div>
            <div className="ml-[12px] flex h-[42px] w-[243px] items-center rounded-full bg-[#282828] pl-[16px] text-[#e3e3e3]">
              <Art className="size-[18px]" box="0 0 18 18">
                <path d="M5 1 L7 0.500 L9 1.500 L11 0.500 L13 1 L14.500 7.500 H3.500Z" fill="#e3e3e3" />
                <path d="M6.500 3 H11.500 L12 6 H6Z" fill="#282828" />
                <path d="M0.500 8.500 H17.500" stroke="#e3e3e3" strokeWidth="2" />
                <circle cx="4.800" cy="14" r="2.300" stroke="#e3e3e3" strokeWidth="1.800" />
                <circle cx="13.200" cy="14" r="2.300" stroke="#e3e3e3" strokeWidth="1.800" />
                <path d="M7 13.500 H11" stroke="#e3e3e3" strokeWidth="1.500" />
              </Art>
              <Fit w={182.5} className="ml-[10px] text-[14.5px]">Окно в режиме инкогнито</Fit>
            </div>
            <Art className="ml-[26px] h-[18px] w-[4px]" box="0 0 4 18">
              <circle cx="2" cy="2.200" r="2" fill="#c7c7c7" />
              <circle cx="2" cy="9" r="2" fill="#c7c7c7" />
              <circle cx="2" cy="15.800" r="2" fill="#c7c7c7" />
            </Art>
          </div>
          <div className="flex h-[51px] items-center">
            <Bookmark className="w-[192px] gap-[9px] pl-[16px]" text="Welcome to r-artur...." w={139} icon={
              <Art className="size-[18px]" box="0 0 18 18">
                <circle cx="9" cy="9" r="9" fill="#c5c9ce" />
                <path d="M3 5 Q7 1 11 2.500 L9 6 L6 7 L8 9.500 L12 10 L10 14 L9 16 Q7 15 7 12 L3 9Z M13 4 Q17 7 16 10 L12 8Z" fill="#45484c" />
              </Art>} />
            <Bookmark className="w-[96px] gap-[7px] pl-[16px]" text="Яндекс" w={48} icon={
              <Art className="size-[20px]" box="0 0 20 20">
                <circle cx="10" cy="10" r="10" fill="#000" />
                <path d="M10 1 Q10.500 9 19 10 Q10.500 11 10 19 Q9.500 11 1 10 Q9.500 9 10 1Z" fill="#fff" stroke="#fff" strokeWidth="0.500" />
              </Art>} />
            <Bookmark className="w-[90px] gap-[7px] pl-[16px]" text="Почта" w={40} icon={
              <Art className="size-[20px]" box="0 0 20 20">
                <rect y="3" width="20" height="15" fill="#ffc93a" />
                <path d="M0 3 L7 11 L0 18Z M20 3 L13 11 L20 18Z" fill="#ffe04a" />
                <path d="M0 3 H20 L10 13Z" fill="#f8302c" />
              </Art>} />
            <Bookmark className="w-[192px] gap-[7px] pl-[16px]" text="ISO-образ Window..." w={139} icon={
              <Art className="size-[20px]" box="0 0 20 20">
                <rect width="9.500" height="9.500" fill="#f25022" />
                <rect x="10.500" width="9.500" height="9.500" fill="#7fba00" />
                <rect y="10.500" width="9.500" height="9.500" fill="#00a4ef" />
                <rect x="10.500" y="10.500" width="9.500" height="9.500" fill="#ffb900" />
              </Art>} />
            <Bookmark className="gap-[8px] pl-[16px]" text="Невозможно устан..." w={140} icon={
              <Art className="size-[20px]" box="0 0 16 16">
                <path d="M8 0C3.580 0 0 3.580 0 8c0 3.540 2.290 6.530 5.470 7.590.4.070.55-.17.55-.38 0-.19-.01-.82-.01-1.490-2.010.37-2.530-.49-2.690-.94-.09-.23-.48-.94-.82-1.130-.28-.15-.68-.52-.01-.53.63-.01 1.080.58 1.230.82.72 1.210 1.870.87 2.330.66.07-.52.28-.87.51-1.070-1.780-.2-3.640-.89-3.640-3.950 0-.87.31-1.590.82-2.150-.08-.2-.36-1.020.08-2.120 0 0 .67-.21 2.200.82.64-.18 1.320-.27 2-.27s1.360.09 2 .27c1.530-1.040 2.200-.82 2.200-.82.44 1.100.16 1.920.08 2.120.51.56.82 1.270.82 2.150 0 3.070-1.870 3.750-3.650 3.950.29.25.54.73.54 1.480 0 1.070-.01 1.930-.01 2.200 0 .21.15.46.55.38A8.010 8.010 0 0 0 16 8c0-4.420-3.580-8-8-8z" fill="#24292f" />
              </Art>} />
            <Art className="mr-[39px] ml-auto h-[11px] w-[12px]" box="0 0 12 11"><path d="M1 1 L5.500 5.500 L1 10 M6.500 1 L11 5.500 L6.500 10" stroke="#c7c7c7" strokeWidth="1.700" /></Art>
          </div>
        </div>
      </div>
      <div className="flex h-[103px] shrink-0 items-center bg-[#6200e8] px-[25px] font-['Liberation_Sans']">
        <Fit w={153} className="-mt-[4px] text-[30px] font-bold text-white">Предметы</Fit>
        <Art className="mr-[62px] ml-auto h-[34px] w-[29px]" box="0 0 29 34">
          <path d="M5 1 H28 V33 H5 L1 30 V5Z" fill="#ffb900" stroke="#000" strokeWidth="2" strokeLinejoin="round" />
          <path d="M5 3 H8 V28 H3 V5Z" fill="#f0a30a" />
          <path d="M3 4 V29" stroke="#c9c4a8" strokeWidth="2" strokeDasharray="1.500 1.300" />
          <path d="M4 29.500 H25" stroke="#fff" strokeWidth="2.400" />
          <path d="M26 28 V32" stroke="#ffb900" strokeWidth="1" />
        </Art>
        <Art className="mr-[3px] size-[34px]" box="0 0 34 34">
          <path d="M13.500 1 H20.500 V13.500 H33 V20.500 H20.500 V33 H13.500 V20.500 H1 V13.500 H13.500Z" fill="#9a9a9a" stroke="#000" strokeWidth="2" />
        </Art>
      </div>
      <div className="px-[114px] pt-[44px] font-['Liberation_Sans'] text-[20px] leading-6 whitespace-pre text-[#333]">
        Нет предметов, нажмите <b>+</b>, чтобы добавить предмет.
      </div>
    </div>
  );
}

/* ---------- taskbar ---------- */

function TaskButton({ children, bar, tail, active, className }: { children: ReactNode; bar?: string; tail?: boolean; active?: boolean; className: string }) {
  return (
    <div className={"relative flex h-[49px] items-center justify-center " + className + (active ? " bg-[#3b4245]" : "")}>
      {children}
      {bar && (
        <div className={"absolute bottom-0 left-0 flex h-[2px] " + bar}>
          <div className="grow bg-[#98a6b4]" />
          {tail && <div className="w-[11px] bg-[#6f7a84]" />}
        </div>
      )}
    </div>
  );
}

const Tray = ({ children }: { children: ReactNode }) => (
  <div className="flex w-10 shrink-0 justify-center">
    <Art className="size-[20px]" box="0 0 20 20">{children}</Art>
  </div>
);

function Taskbar() {
  return (
    <div className="absolute bottom-0 left-0 flex h-[49px] w-full items-center bg-[#272c30] text-white">
      <div className="flex w-[60px] justify-center">
        <Art className="size-[20px]" box="0 0 20 20">
          <path d="M0 3 L8.500 1.700 V9.500 H0Z M9.500 1.500 L20 0 V9.500 H9.500Z M0 10.500 H8.500 V18.300 L0 17Z M9.500 10.500 H20 V20 L9.500 18.500Z" fill="#fff" />
        </Art>
      </div>
      <div className="relative flex h-[49px] w-[360px] items-center border border-b-0 border-[#6f7576] bg-[#4b4f4f] pl-[14px]">
        <Art className="size-[21px]" box="0 0 21 21">
          <circle cx="13" cy="8" r="7" stroke="#e8e8e8" strokeWidth="1.500" />
          <path d="M8 13 L0.500 20.500" stroke="#e8e8e8" strokeWidth="1.500" />
        </Art>
        <Fit w={54} className="ml-[14px] text-[19px] text-[#d8dde0]">Поиск</Fit>
        <Art className="absolute right-0 bottom-0 h-[48px] w-[94px]" box="0 0 94 48">
          <defs>
            <linearGradient id="hill" x1="0" y1="0" x2="1" y2="0">
              <stop stopColor="#8fae3c" />
              <stop offset="0.500" stopColor="#c7cb6b" />
              <stop offset="1" stopColor="#7f9a3b" />
            </linearGradient>
            <linearGradient id="coat" x1="0" y1="0" x2="1" y2="0">
              <stop stopColor="#ead3b4" />
              <stop offset="0.500" stopColor="#cd8153" />
              <stop offset="1" stopColor="#b77652" />
            </linearGradient>
          </defs>
          <path d="M0 48 Q16 38 46 38 Q78 38 93 48Z" fill="url(#hill)" />
          <path d="M42 46 Q62 42 84 46 L80 48 H42Z" fill="#4f6a24" />
          <path d="M27 3 L30 6 L33 2 L32 9 L34 18 Q40 14 51 15 Q56 16 58 17 L57 22 Q54 26 55 30 L57 34 L55 46 H50 L52 36 L47 27 L42 28 L41 38 L42 48 H38 L38 34 L37 46 H34 L35 30 Q26 24 26 12 L20 11 L21 8 Q24 5 27 6Z" fill="url(#coat)" />
          <path d="M20 8.500 L26 8 L27 11 L21 12Z" fill="#5d5048" />
          <path d="M52 36 L55 37 L54 46 H50Z M38.500 38 H41 L42 48 H38.500Z M35 36 H37 V46 H34Z" fill="#efdcd0" />
          <path d="M57 17 Q62 14 60 22" stroke="#b87350" strokeWidth="2" />
        </Art>
      </div>
      <div className="flex w-[69px] pl-[20px]">
        <Art className="size-[20px]" box="0 0 20 20">
          <path d="M0.600 0.500 V4 H12.400 V0.500 M0.600 19.500 V16 H12.400 V19.500 M0.600 6.500 H12.400 V13.500 H0.600Z M18.500 0 V5 M18.500 10 V19.500" stroke="#fff" strokeWidth="1.100" />
          <rect x="17" y="6" width="3" height="3" fill="#fff" />
        </Art>
      </div>
      <TaskButton className="w-[62px] pr-[12px]" bar="w-[51px]"><Firefox className="size-[30px]" /></TaskButton>
      <TaskButton className="w-[62px] pr-[12px]" bar="w-[51px]" tail><Edge className="size-[30px]" /></TaskButton>
      <TaskButton className="w-[62px] pr-[13px]">
        <Art className="size-[30px]" box="0 0 30 30">
          <path d="M8 6 V2 H22 V6" stroke="#22b0f4" strokeWidth="2.200" />
          <path d="M1 5 H29 V26 Q29 30 25 30 H5 Q1 30 1 26Z" fill="#eeefef" />
          <path d="M8 5 V6 M22 5 V6" stroke="#22b0f4" strokeWidth="2.200" />
          <rect x="9.500" y="12" width="5.200" height="5.200" fill="#f25022" />
          <rect x="15.500" y="12" width="5.200" height="5.200" fill="#7fba00" />
          <rect x="9.500" y="18" width="5.200" height="5.200" fill="#00a4ef" />
          <rect x="15.500" y="18" width="5.200" height="5.200" fill="#ffb900" />
        </Art>
      </TaskButton>
      <TaskButton className="w-[57px] pr-[8px]" bar="w-[51px]" tail>
        <Art className="size-[28px]" box="0 0 28 28">
          <path d="M0 3 H12 L14 6 H28 V25 H0Z" fill="#fcd462" />
          <path d="M0 3 H12 L14 6 L11 7 H0Z" fill="#dfa010" />
          <path d="M5 26 V17 Q5 15 7 15 H21 Q23 15 23 17 V26 H19 V20 H9 V26Z" fill="#3a93d8" />
        </Art>
      </TaskButton>
      <div className="flex">
        <TaskButton className="w-[56px] pl-[4px]" bar="w-[61px]" active><Chrome className="size-[30px]" /></TaskButton>
        <div className="ml-px h-[47px] w-[4px] bg-[#343b3e]" />
      </div>
      <div className="ml-auto flex items-center pr-[6px]">
        <Tray>
          <circle cx="10" cy="10" r="10" fill="#000" />
          <text x="3.500" y="14" fontSize="10.500" fontFamily="Liberation Sans" fill="#fff" textLength="13" lengthAdjust="spacingAndGlyphs">B&O</text>
        </Tray>
        <Tray>
          <rect width="20" height="20" rx="1" fill="#d50a12" />
          <text x="4" y="15.500" fontSize="16" fontWeight="700" fontFamily="Liberation Sans" fill="#fff" textLength="10" lengthAdjust="spacingAndGlyphs">B</text>
          <path d="M15 12 L19 18 H11Z" fill="#fff" />
        </Tray>
        <Tray>
          <path d="M9.500 1 Q13 3.500 18.500 3.500 Q19 15 9.500 19 Q0 15 0.500 3.500 Q6 3.500 9.500 1Z" fill="#fff" stroke="#111" strokeWidth="0.600" />
          <path d="M9.500 1 V19 M0.500 10 H18" stroke="#222" strokeWidth="1.200" />
          <circle cx="14.500" cy="14.500" r="5.500" fill="#109243" />
          <path d="M12 14.500 L14 16.500 L17.500 12.500" stroke="#fff" strokeWidth="1.300" />
        </Tray>
        <Tray>
          <path d="M4 18 Q0 17.500 0 13 Q0 9 3.500 8 Q4 2 10 2 Q16 2 16.500 8 Q20 9 20 13 Q20 17.500 16 18Z" fill="#18c0ce" />
          <path d="M6.500 10.500 L9 13 L13.500 8.500" stroke="#fff" strokeWidth="1.700" />
        </Tray>
        <Tray>
          <rect x="2.500" width="15" height="20" rx="7.500" fill="#0a7cf2" />
          <path d="M6 6.500 L13.500 13.500 L10 16.500 V3.500 L13.500 6.500 L6 13.500" stroke="#fff" strokeWidth="1.100" />
        </Tray>
        <Tray>
          <rect width="20" height="20" rx="2.500" fill="#fff" />
          <path d="M4 13 A7 7 0 0 1 13 4 M16 7 A7 7 0 0 1 7 16" stroke="#1494f4" strokeWidth="3" />
        </Tray>
        <Tray>
          <circle cx="10" cy="10" r="9.200" fill="#0d0d0d" stroke="#ddd" strokeWidth="1.200" />
          <path d="M10 10 C5 8 5 5 7 3 M10 10 C11 15 8 17 5 16 M10 10 C13 6 16 7 17.500 11" stroke="#ddd" strokeWidth="1.600" />
        </Tray>
        <Tray>
          <path d="M7 4 H18.500 V13.500 H4.500 V10 M11.500 14 V17.500 M7 18 H15" stroke="#fff" strokeWidth="1.200" />
          <rect x="0.500" y="5" width="6" height="5" fill="#fff" />
          <path d="M2 5 V2.500 H5 V5" stroke="#fff" />
        </Tray>
        <Tray>
          <rect width="20" height="20" fill="#fe4537" />
          <g transform="scale(0.333)">{anyMark}</g>
        </Tray>
        <Tray>
          <path d="M2.500 17.500 Q4 5 17 4 M6 18 Q7 9.500 17 8 M9.500 18 Q10.500 13 17 11.500 M13 18 Q13.500 16 17 15" stroke="#e6e6e6" strokeWidth="1.100" />
          <circle cx="15.500" cy="17" r="1.600" fill="#fff" />
        </Tray>
        <Tray>
          <path d="M0.600 7 H3.500 L8.500 3 V17 L3.500 13 H0.600Z M12 7 L18.500 13.500 M18.500 7 L12 13.500" stroke="#e6e6e6" strokeWidth="1.100" />
        </Tray>
        <Tray>
          <path d="M1 5 H18 V15.500 H1Z M19.300 8.500 V12" stroke="#fff" strokeWidth="1.200" />
          <rect x="3" y="7" width="9.500" height="6.500" fill="#fff" />
        </Tray>
        <div className="w-[5px]" />
        <Tray>
          <path d="M14.500 0.500 L18 3 L9 16 L5.500 18 L6 14Z M13 11 Q19 8 19 11.500 Q18 14 12.500 13 M7 10 Q0 12 1 17 Q4 21 8 16" stroke="#e6e6e6" strokeWidth="1.100" />
        </Tray>
        <div className="flex w-[54px] justify-center text-[14.5px]"><Fit w={28}>ENG</Fit></div>
        <div className="flex w-[78px] flex-col items-center pr-px text-[14.5px] leading-6">
          <Fit w={34}>21:55</Fit>
          <Fit w={69}>09.12.2024</Fit>
        </div>
        <div className="ml-[19px] flex w-[44px]">
          <Art className="size-[20px]" box="0 0 20 20"><path d="M0.600 1 H19.400 V16 H13 L10 19 V16 H0.600Z" stroke="#fff" strokeWidth="1.200" /></Art>
        </div>
        <div className="h-[49px] w-px bg-[#71777a]" />
      </div>
    </div>
  );
}

export default function App() {
  return (
    <div className="relative h-[1079px] w-[1920px] overflow-hidden bg-[#4b5459] font-['Noto_Sans',sans-serif]">
      <div className="flex gap-px">
        {columns.map((col, i) => (
          <div key={i} className="w-[94px] shrink-0">
            {col.map((item, j) => (
              <DesktopItem key={j} item={item} />
            ))}
          </div>
        ))}
      </div>
      <Browser />
      <Taskbar />
    </div>
  );
}
